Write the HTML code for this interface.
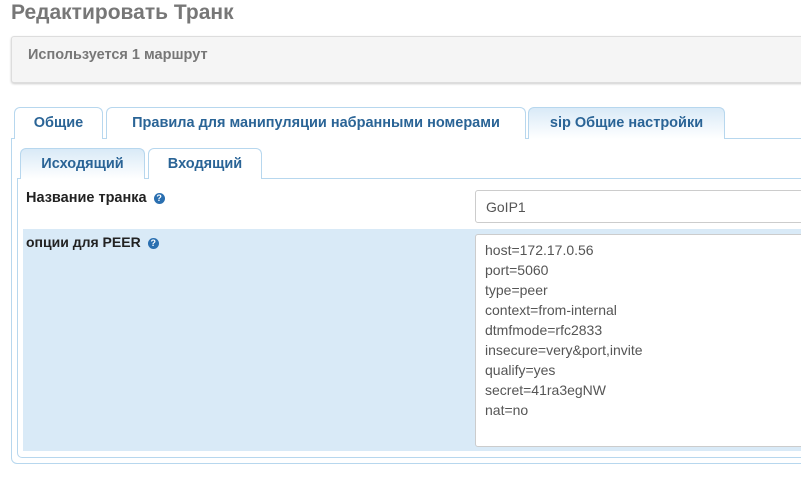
<!DOCTYPE html><html><head><meta charset="utf-8"><style>
body{margin:0;width:801px;height:477px;overflow:hidden;background:#fff;font-family:"Liberation Sans","DejaVu Sans",sans-serif;position:relative}
div{position:absolute;box-sizing:border-box}
.t{font-weight:bold;font-size:14.5px;color:#2a6496;text-align:center;line-height:30px;border:1px solid #b7d7ee;border-bottom:none;border-radius:6px 6px 0 0;background:#fff}
.a{background:linear-gradient(#d9eaf7,#fff)}
.q{display:inline-block;width:11px;height:11px;border-radius:50%;background:#2a6fb0;color:#fff;font-size:9px;line-height:11px;text-align:center;vertical-align:1px;margin-left:7px}
</style></head><body>
<div style="left:11px;top:1px;font-size:21px;font-weight:bold;color:#777">Редактировать Транк</div>
<div style="left:11px;top:36px;width:800px;height:47px;background:#f5f5f5;border:1px solid #ddd;border-radius:3px;box-shadow:0 1px 2px #ccc;padding:10px 16px;font-size:14.5px;font-weight:bold;color:#777">Используется 1 маршрут</div>
<div style="left:11px;top:138px;width:800px;height:326px;border:1px solid #b7d7ee;border-radius:0 0 6px 6px"></div>
<div class="t" style="left:14px;top:107px;width:89px;height:32px">Общие</div>
<div class="t" style="left:106px;top:107px;width:420px;height:32px">Правила для манипуляции набранными номерами</div>
<div class="t a" style="left:528px;top:107px;width:197px;height:32px">sip Общие настройки</div>
<div style="left:17px;top:178px;width:790px;height:280px;border:1px solid #b7d7ee;border-radius:0 0 5px 5px"></div>
<div class="t a" style="left:20px;top:148px;width:125px;height:31px">Исходящий</div>
<div class="t" style="left:148px;top:148px;width:114px;height:31px">Входящий</div>
<div style="left:26px;top:190px;font-size:14.5px;font-weight:bold;color:#222">Название транка<span class="q">?</span></div>
<div style="left:475px;top:190px;width:340px;height:33px;border:1px solid #ccc;border-radius:3px;padding:8px 10px;font-size:14px;color:#555">GoIP1</div>
<div style="left:23px;top:229px;width:790px;height:222px;background:#d9eaf7"></div>
<div style="left:26px;top:234px;font-size:14px;font-weight:bold;color:#222">опции для PEER<span class="q">?</span></div>
<div style="left:475px;top:234px;width:340px;height:213px;border:1px solid #ccc;border-radius:3px;background:#fff;padding:5px 9px;font-size:14px;line-height:20px;color:#555">host=172.17.0.56<br>port=5060<br>type=peer<br>context=from-internal<br>dtmfmode=rfc2833<br>insecure=very&amp;port,invite<br>qualify=yes<br>secret=41ra3egNW<br>nat=no</div>
</body></html>
